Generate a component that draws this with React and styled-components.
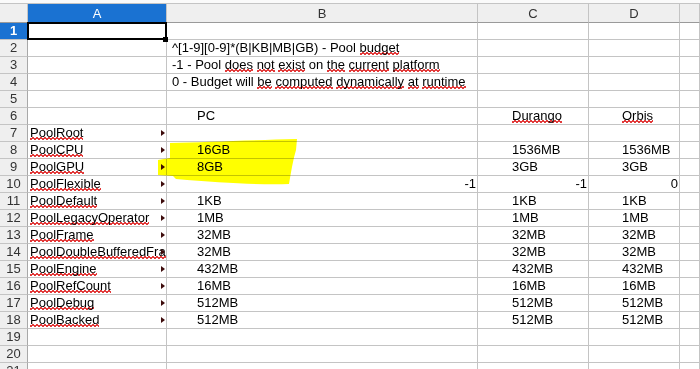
import React from 'react'
import styled, { createGlobalStyle } from 'styled-components'

const COLS = '28px 139px 311px 111px 91px 1fr'

const rows = [
  { a: '' },
  { b: '^[1-9][0-9]*(B|KB|MB|GB) - Pool budget', bIndent: 3, spell: ['budget'] },
  { b: '-1 - Pool does not exist on the current platform', bIndent: 3, spell: ['does', 'not', 'exist', 'the', 'current', 'platform'] },
  { b: '0 - Budget will be computed dynamically at runtime', bIndent: 3, spell: ['be', 'computed', 'dynamically', 'at', 'runtime'] },
  {},
  { b: 'PC', c: 'Durango', d: 'Orbis', spell: ['Durango', 'Orbis'] },
  { a: 'PoolRoot' },
  { a: 'PoolCPU', b: '16GB', c: '1536MB', d: '1536MB' },
  { a: 'PoolGPU', b: '8GB', c: '3GB', d: '3GB' },
  { a: 'PoolFlexible', b: '-1', c: '-1', d: '0', num: true },
  { a: 'PoolDefault', b: '1KB', c: '1KB', d: '1KB' },
  { a: 'PoolLegacyOperator', b: '1MB', c: '1MB', d: '1MB' },
  { a: 'PoolFrame', b: '32MB', c: '32MB', d: '32MB' },
  { a: 'PoolDoubleBufferedFrame', b: '32MB', c: '32MB', d: '32MB' },
  { a: 'PoolEngine', b: '432MB', c: '432MB', d: '432MB' },
  { a: 'PoolRefCount', b: '16MB', c: '16MB', d: '16MB' },
  { a: 'PoolDebug', b: '512MB', c: '512MB', d: '512MB' },
  { a: 'PoolBacked', b: '512MB', c: '512MB', d: '512MB' },
  {},
  {},
  {},
]

const GlobalStyle = createGlobalStyle`
  html, body {
    margin: 0;
    background: #fff;
    overflow: hidden;
  }
  body {
    font-family: "Liberation Sans", Arial, sans-serif;
  }
`

const Sheet = styled.div`
  position: relative;
  width: 700px;
  height: 369px;
  overflow: hidden;
  display: grid;
  grid-template-columns: ${COLS};
  grid-template-rows: 4px 19px;
  grid-auto-rows: 17px;
  font-size: 13px;
  color: #000;
`

const TopStrip = styled.div`
  grid-column: 1 / -1;
  background: #fafafa;
  border-bottom: 1px solid #c4c4c4;
`

const ColHead = styled.div`
  box-sizing: border-box;
  display: flex;
  align-items: center;
  justify-content: center;
  background: ${p => (p.$selected ? '#1a72d2' : '#efefef')};
  color: ${p => (p.$selected ? '#fff' : '#333')};
  border-right: 1px solid #c4c4c4;
  border-bottom: 1px solid #9a9a9a;
  font-size: 13px;
  padding-top: 1px;
`

const RowHead = styled.div`
  box-sizing: border-box;
  display: flex;
  align-items: flex-end;
  justify-content: center;
  background: ${p => (p.$selected ? '#1a72d2' : '#efefef')};
  color: ${p => (p.$selected ? '#fff' : '#333')};
  font-weight: ${p => (p.$selected ? 'bold' : 'normal')};
  border-right: 1px solid #a8a8a8;
  border-bottom: 1px solid #c4c4c4;
  font-size: 13px;
  line-height: 16px;
`

const Cell = styled.div`
  position: relative;
  box-sizing: border-box;
  border-right: 1px solid #c4c4c4;
  border-bottom: 1px solid #c4c4c4;
  padding: 0 1px 0 ${p => 2 + (p.$indent || 0)}px;
  text-align: ${p => (p.$num ? 'right' : 'left')};
  line-height: 16px;
  white-space: pre;
  overflow: hidden;
`

const Spell = styled.span`
  background-image:
    linear-gradient(135deg, transparent 40%, #e23a3a 40%, #e23a3a 62%, transparent 62%),
    linear-gradient(45deg, transparent 40%, #e23a3a 40%, #e23a3a 62%, transparent 62%);
  background-size: 4px 3px;
  background-repeat: repeat-x;
  background-position: 0 calc(100% - 0px), 2px calc(100% - 0px);
`

const Marker = styled.span`
  position: absolute;
  right: 1px;
  top: 5px;
  width: 0;
  height: 0;
  border-left: 4px solid #3d0b0b;
  border-top: 3px solid transparent;
  border-bottom: 3px solid transparent;
`

const Selection = styled.div`
  position: absolute;
  left: 27px;
  top: 22px;
  width: 140px;
  height: 18px;
  box-sizing: border-box;
  border: 2px solid #000;
  pointer-events: none;
`

const Handle = styled.div`
  position: absolute;
  left: 163px;
  top: 37px;
  width: 5px;
  height: 5px;
  background: #000;
`

const Highlight = styled.svg`
  position: absolute;
  left: 0;
  top: 0;
  mix-blend-mode: multiply;
  pointer-events: none;
`

function Text({ text, spell }) {
  if (!text) return null
  if (!spell || spell.length === 0) return text
  const parts = text.split(/(\s+)/)
  return parts.map((p, i) =>
    spell.includes(p) ? <Spell key={i}>{p}</Spell> : <React.Fragment key={i}>{p}</React.Fragment>
  )
}

export default function App() {
  return (
    <>
      <GlobalStyle />
      <Sheet>
        <TopStrip />
        <ColHead />
        <ColHead $selected>A</ColHead>
        <ColHead>B</ColHead>
        <ColHead>C</ColHead>
        <ColHead>D</ColHead>
        <ColHead />
        {rows.map((r, i) => {
          const n = i + 1
          const isPool = r.a && r.a.startsWith('Pool')
          return (
            <React.Fragment key={n}>
              <RowHead $selected={n === 1}>{n}</RowHead>
              <Cell>
                {isPool ? <Spell>{r.a}</Spell> : r.a}
                {isPool && <Marker />}
              </Cell>
              <Cell $num={r.num} $indent={r.num ? 0 : r.bIndent ?? 28}>
                <Text text={r.b} spell={r.spell} />
              </Cell>
              <Cell $num={r.num} $indent={r.num ? 0 : 32}>
                <Text text={r.c} spell={r.spell} />
              </Cell>
              <Cell $num={r.num} $indent={r.num ? 0 : 31}>
                <Text text={r.d} spell={r.spell} />
              </Cell>
              <Cell />
            </React.Fragment>
          )
        })}
        <Selection />
        <Handle />
        <Highlight width="700" height="369" viewBox="0 0 700 369">
          <path
            d="M170 143 C205 142 255 140 297 139 L296 150 C293 160 291 172 289 184 C262 185 222 183 176 179 L173 176 L158 175 L158 160 L170 158 Z"
            fill="#ffff00"
          />
        </Highlight>
      </Sheet>
    </>
  )
}
